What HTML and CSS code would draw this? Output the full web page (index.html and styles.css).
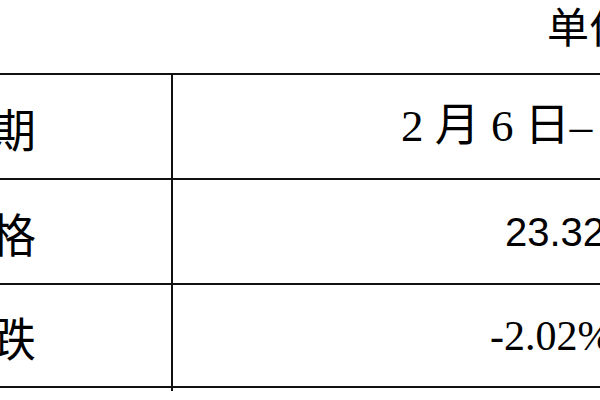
FILE: index.html
```html
<!DOCTYPE html>
<html lang="zh-CN">
<head>
<meta charset="utf-8">
<title>价格表</title>
<link rel="stylesheet" href="styles.css">
</head>
<body>
<div class="page">
  <div class="unit">单位：元</div>
  <div class="table">
    <div class="row r1">
      <div class="label"><span>日期</span></div>
      <div class="value v-date">2 月 6 日– 2 月 12 日</div>
    </div>
    <div class="row r2">
      <div class="label"><span>价格</span></div>
      <div class="value v-price">23.32</div>
    </div>
    <div class="row r3">
      <div class="label"><span>涨跌</span></div>
      <div class="value v-change">-2.02%</div>
    </div>
  </div>
</div>
</body>
</html>
```
FILE: styles.css
```css
html, body {
  margin: 0;
  padding: 0;
  background: #fff;
}
.page {
  width: 600px;
  height: 400px;
  overflow: hidden;
  color: #000;
}
.unit {
  height: 73px;
  box-sizing: border-box;
  padding: 4px 0 0 547px;
  font-family: "Noto Sans CJK SC", sans-serif;
  font-size: 42px;
  line-height: 42px;
  white-space: nowrap;
}
.table {
  border-top: 2px solid #111;
  width: 900px;
}
.row {
  display: flex;
  border-bottom: 2px solid #111;
}
.r1 { height: 103px; }
.r2 { height: 103px; }
.r3 { height: 101px; position: relative; }
.label {
  flex: none;
  width: 173px;
  box-sizing: border-box;
  border-right: 2px solid #111;
  display: flex;
  justify-content: flex-end;
  align-items: center;
  padding-right: 135px;
  font-family: "Noto Sans CJK SC", sans-serif;
  font-size: 46px;
  line-height: 1;
  white-space: nowrap;
  overflow: hidden;
}
.label span { flex: none; }
.r3 .label { position: relative; overflow: visible; }
.r3 .label::after {
  content: "";
  position: absolute;
  right: -2px;
  bottom: -5px;
  width: 2px;
  height: 3px;
  background: #111;
}
.value {
  flex: 1;
  display: flex;
  align-items: center;
  white-space: pre;
  overflow: hidden;
  line-height: 1;
}
.v-date {
  padding-left: 228px;
  font-family: "Liberation Serif", "Noto Sans CJK SC", serif;
  font-size: 45px;
}
.v-price {
  padding-left: 332px;
  font-family: "Liberation Sans", sans-serif;
  font-size: 40px;
}
.v-change {
  padding-left: 317px;
  font-family: "Liberation Serif", serif;
  font-size: 42px;
}
```
